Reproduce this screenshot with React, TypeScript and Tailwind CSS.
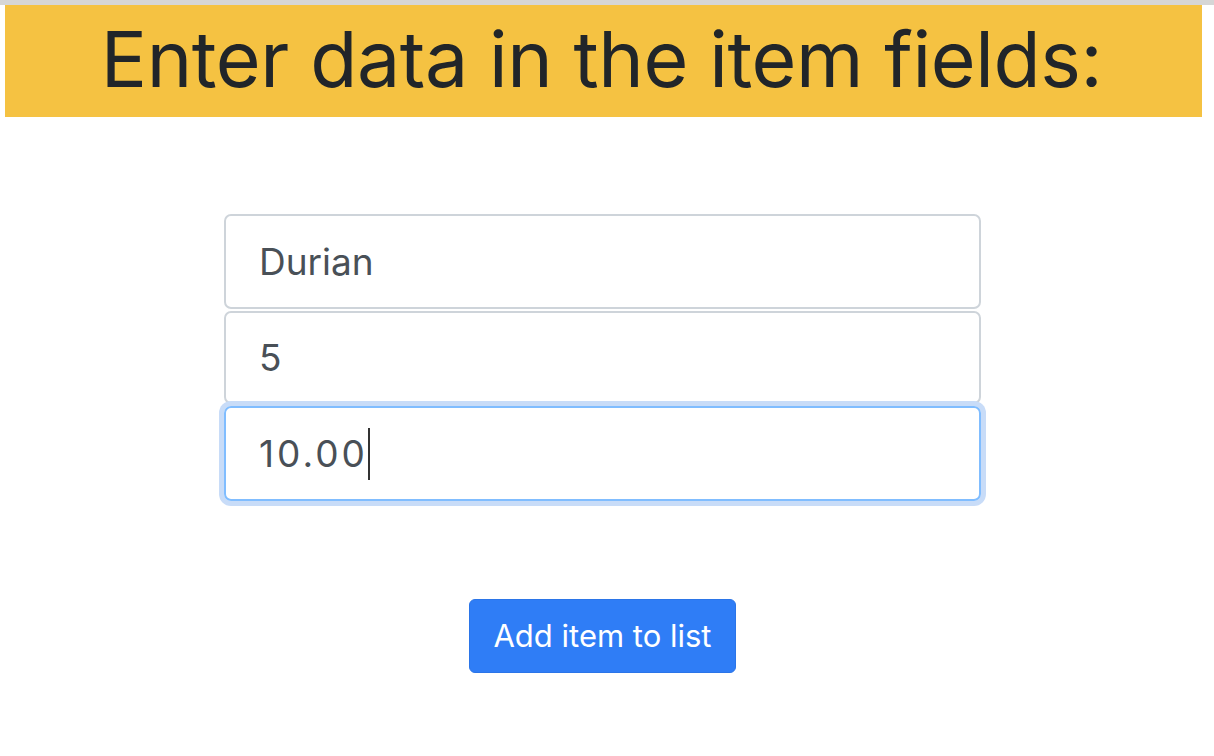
export default function App() {
  return (
    <div className="min-h-[756px] bg-white font-['Inter',sans-serif]">
      {/* Top strip */}
      <div className="h-[5px] bg-[#d6d6d6]" />

      {/* Banner */}
      <div className="mx-[5px] w-[1197px] h-[112px] bg-[#f5c242] flex items-center justify-center">
        <h1 className="text-[77px] leading-none text-[#212529] tracking-[-0.4px] pb-[4px] pr-[4px]">
          Enter data in the item fields:
        </h1>
      </div>

      {/* Form */}
      <div className="w-[1205px] flex flex-col items-center pt-[97px]">
        <div className="w-[757px] flex flex-col gap-[2px]">
          <input
            readOnly
            value="Durian"
            className="h-[95px] rounded-[7px] border-2 border-[#ced4da] px-[33px] text-[37px] text-[#495057] outline-none"
          />
          <input
            readOnly
            value="5"
            className="h-[93px] rounded-[7px] border-2 border-[#ced4da] px-[33px] text-[37px] tracking-[2px] text-[#495057] outline-none"
          />
          <div className="h-[95px] rounded-[7px] border-2 border-[#80bdff] shadow-[0_0_0_5px_#c8dcf8] px-[33px] flex items-center text-[37px] text-[#495057]">
            <span className="tracking-[3px]">10.00</span>
            <span className="inline-block w-[2px] h-[52px] bg-[#333]" />
          </div>
        </div>

        <button className="mt-[98px] w-[267px] h-[74px] rounded-[6px] bg-[#2f7df6] border border-[#2b75e8] text-white text-[31px]">
          Add item to list
        </button>
      </div>
    </div>
  );
}
